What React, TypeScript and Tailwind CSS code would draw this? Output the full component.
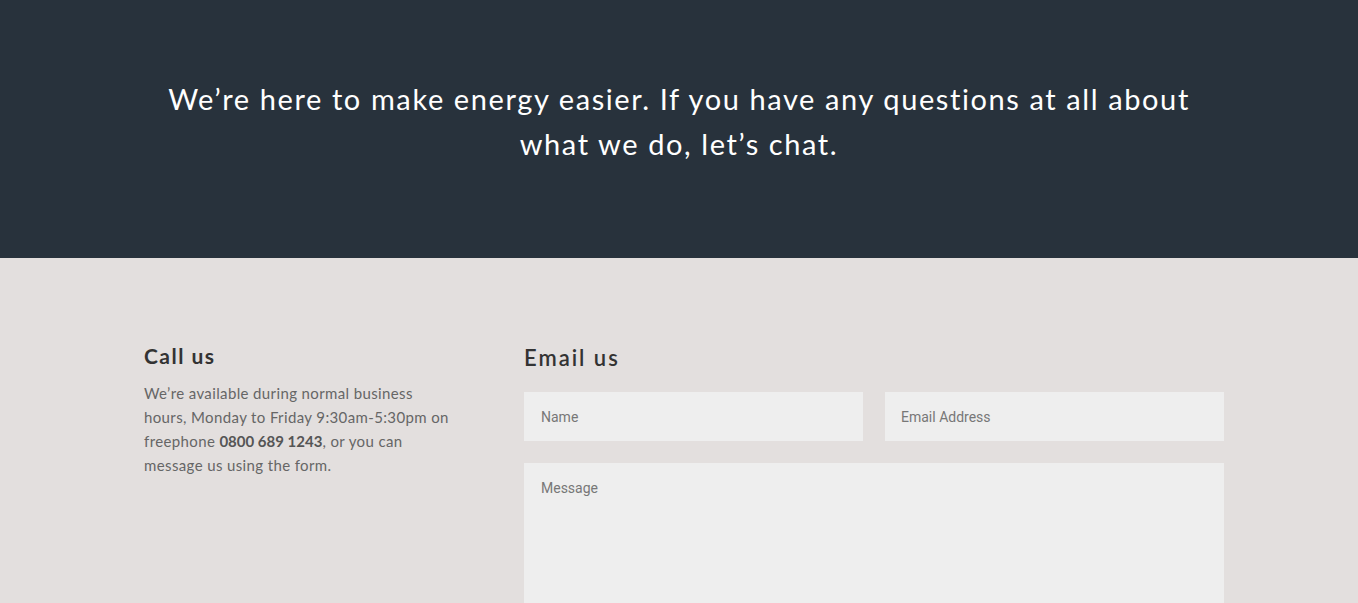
export default function App() {
  return (
    <div className="min-h-screen bg-[#e3dfde]" style={{ fontFamily: 'Lato, "Noto Sans", sans-serif' }}>
      <section className="bg-[#28323c] h-[258px] flex items-center justify-center px-6">
        <h1 className="text-white text-[29px] leading-[45px] tracking-[0.055em] text-center max-w-[1060px] font-normal -mt-[16px]">
          We’re here to make energy easier. If you have any questions at all about what we do, let’s chat.
        </h1>
      </section>

      <section className="max-w-[1090px] mx-auto pl-[10px] pt-[84px] flex">
        <div className="w-[312px] mr-[68px]">
          <h2 className="text-[21px] font-bold text-[#333] tracking-[0.07em] leading-[28px] mb-[11px]">Call us</h2>
          <p className="text-[15px] leading-[24px] text-[#666] tracking-[0.025em]">
            We’re available during normal business hours, Monday to Friday 9:30am-5:30pm on freephone{' '}
            <b className="font-bold text-[#555] tracking-normal">0800 689 1243</b>, or you can message us using the form.
          </p>
        </div>

        <div className="flex-1">
          <h2 className="text-[22px] font-semibold text-[#333] tracking-[0.09em] leading-[30px] mb-[19px] mt-[1px]">Email us</h2>
          <form className="flex flex-col gap-[22px]">
            <div className="grid grid-cols-2 gap-[22px]">
              <input
                placeholder="Name"
                className="h-[49px] bg-[#eeeeee] px-[17px] text-[14px] text-[#555] placeholder:text-[#777] outline-none"
                style={{ fontFamily: 'Roboto, sans-serif' }}
              />
              <input
                placeholder="Email Address"
                className="h-[49px] bg-[#eeeeee] px-[16px] text-[14px] text-[#555] placeholder:text-[#777] outline-none"
                style={{ fontFamily: 'Roboto, sans-serif' }}
              />
            </div>
            <textarea
              placeholder="Message"
              className="h-[180px] bg-[#eeeeee] px-[17px] py-[15px] text-[14px] text-[#555] placeholder:text-[#777] outline-none resize-none"
              style={{ fontFamily: 'Roboto, sans-serif' }}
            />
          </form>
        </div>
      </section>
    </div>
  )
}
